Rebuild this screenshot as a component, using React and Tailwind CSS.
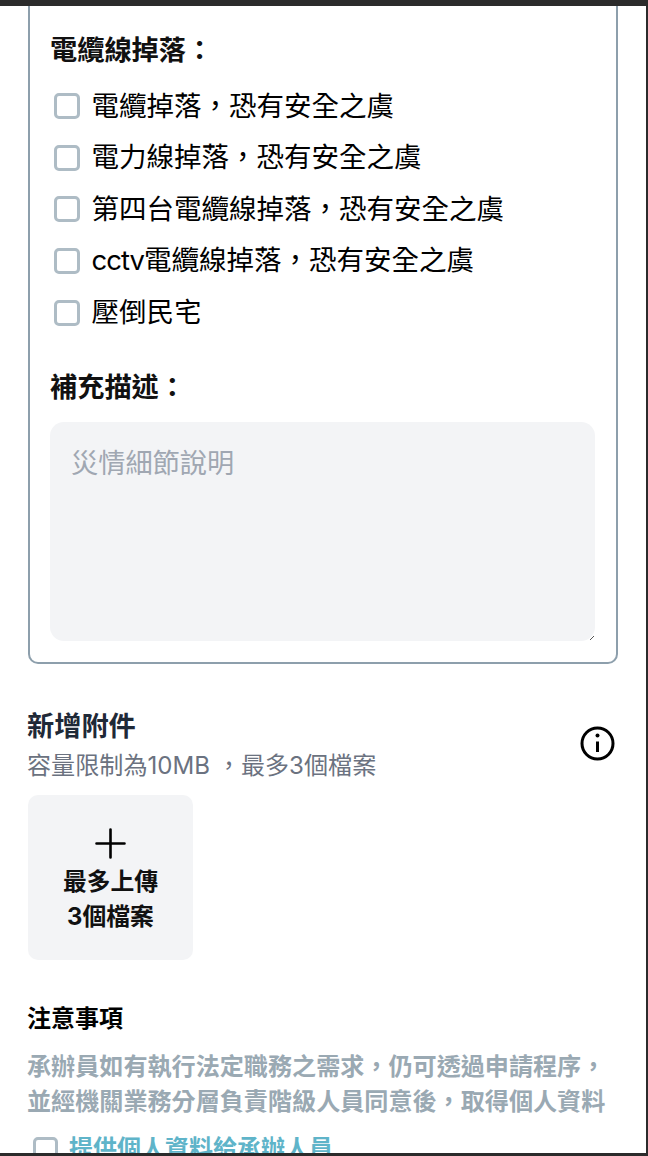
import React from 'react';

const COMMA = '\uFF0C';
const COLON = '\uFF1A';

const options = [
  { text: `電纜掉落${COMMA}恐有安全之虞` },
  { text: `電力線掉落${COMMA}恐有安全之虞` },
  { text: `第四台電纜線掉落${COMMA}恐有安全之虞` },
  { latin: 'cctv', text: `電纜線掉落${COMMA}恐有安全之虞` },
  { text: '壓倒民宅' },
];

function Checkbox({ small }) {
  return (
    <span
      className={`block shrink-0 rounded-[5px] border-[3px] border-[#aebcc5] bg-white ${small ? 'w-[25px] h-[25px]' : 'w-[26px] h-[26px]'}`}
    />
  );
}

export default function App() {
  return (
    <div className="w-[648px] h-[1156px] overflow-hidden flex flex-col bg-white text-black font-['Inter','Noto_Sans_CJK_TC',sans-serif]">
      <div className="h-[6px] shrink-0 bg-[#2b2b2b]" />
      <div className="flex-1 min-h-0 overflow-hidden flex">
        <div className="flex-1 min-w-0 overflow-hidden pl-[28px] pr-[26px]">
          {/* disaster card */}
          <div className="w-[590px] h-[658px] border-2 border-t-0 border-[#8d9fac] rounded-b-[10px] px-[20px] pt-[26px]">
            <h4 className="text-[27.2px] leading-[38px] font-bold text-[#111]">電纜線掉落{COLON}</h4>
            <div className="mt-[15.5px] flex flex-col gap-[10px]">
              {options.map((item) => (
                <label key={item.text} className="h-[41.6px] flex items-center gap-[11.5px] pl-[4px] text-[27.5px]">
                  <Checkbox />
                  <span>
                    {item.latin && <span className="tracking-[-1px]">{item.latin}</span>}
                    {item.text}
                  </span>
                </label>
              ))}
            </div>
            <h4 className="mt-[36px] text-[27.2px] leading-[38px] font-bold text-[#111]">補充描述{COLON}</h4>
            <div className="relative mt-[15px] w-[545px] h-[219px]">
              <textarea
                className="block w-full h-full resize-none rounded-[14px] bg-[#f3f4f6] px-[21px] pt-[22px] pb-[20px] text-[27.2px] leading-[40px] placeholder:text-[#a0a7b2] outline-none"
                placeholder="災情細節說明"
              />
              <svg className="absolute right-0 bottom-0" width="6" height="6" viewBox="0 0 6 6" fill="none" stroke="#555" strokeWidth="1">
                <path d="M1 5L5 1" />
              </svg>
            </div>
          </div>

          {/* attachments */}
          <div className="mt-[46px] flex items-center justify-between pr-[5px]">
            <div className="-ml-px">
              <h3 className="text-[27.2px] leading-[34px] font-bold text-[#1f2937]">新增附件</h3>
              <p className="mt-[5px] text-[24.1px] leading-[34px] text-[#6b7280]">容量限制為10MB {COMMA}最多3個檔案</p>
            </div>
            <svg width="35" height="35" viewBox="0 0 35 35" fill="none" stroke="#000" strokeWidth="3" className="-mt-[7px]">
              <circle cx="17.5" cy="17.5" r="15.5" />
              <path d="M17.5 15.5V26" />
              <circle cx="17.5" cy="9.5" r="2" fill="#000" stroke="none" />
            </svg>
          </div>
          <button className="mt-[12px] w-[165px] h-[165px] rounded-[10px] bg-[#f3f4f6] flex flex-col items-center pt-[33px]">
            <svg width="31" height="31" viewBox="0 0 31 31" fill="none" stroke="#000" strokeWidth="2.6" strokeLinecap="round">
              <path d="M15.5 1.5V29.5M1.5 15.5H29.5" />
            </svg>
            <span className="mt-[5px] text-[23.8px] leading-[35px] font-bold text-[#111]">
              最多上傳
              <br />
              3個檔案
            </span>
          </button>

          {/* notes */}
          <h4 className="-ml-px mt-[41px] text-[24px] leading-[36px] font-bold text-black">注意事項</h4>
          <p className="-ml-px mt-[12px] text-[24.1px] leading-[35px] font-bold text-[#9aa9b3] whitespace-nowrap">
            承辦員如有執行法定職務之需求{COMMA}仍可透過申請程序{COMMA}
            <br />
            並經機關業務分層負責階級人員同意後{COMMA}取得個人資料
          </p>
          <label className="mt-[12px] pl-[5px] flex items-center gap-[11px]">
            <Checkbox small />
            <span className="text-[24px] leading-[36px] font-bold text-[#5fb4c9]">提供個人資料給承辦人員</span>
          </label>
        </div>
        <div className="w-[2px] shrink-0 bg-[#2b2b2b]" />
      </div>
      <div className="h-[3px] shrink-0 bg-[#2b2b2b]" />
    </div>
  );
}
